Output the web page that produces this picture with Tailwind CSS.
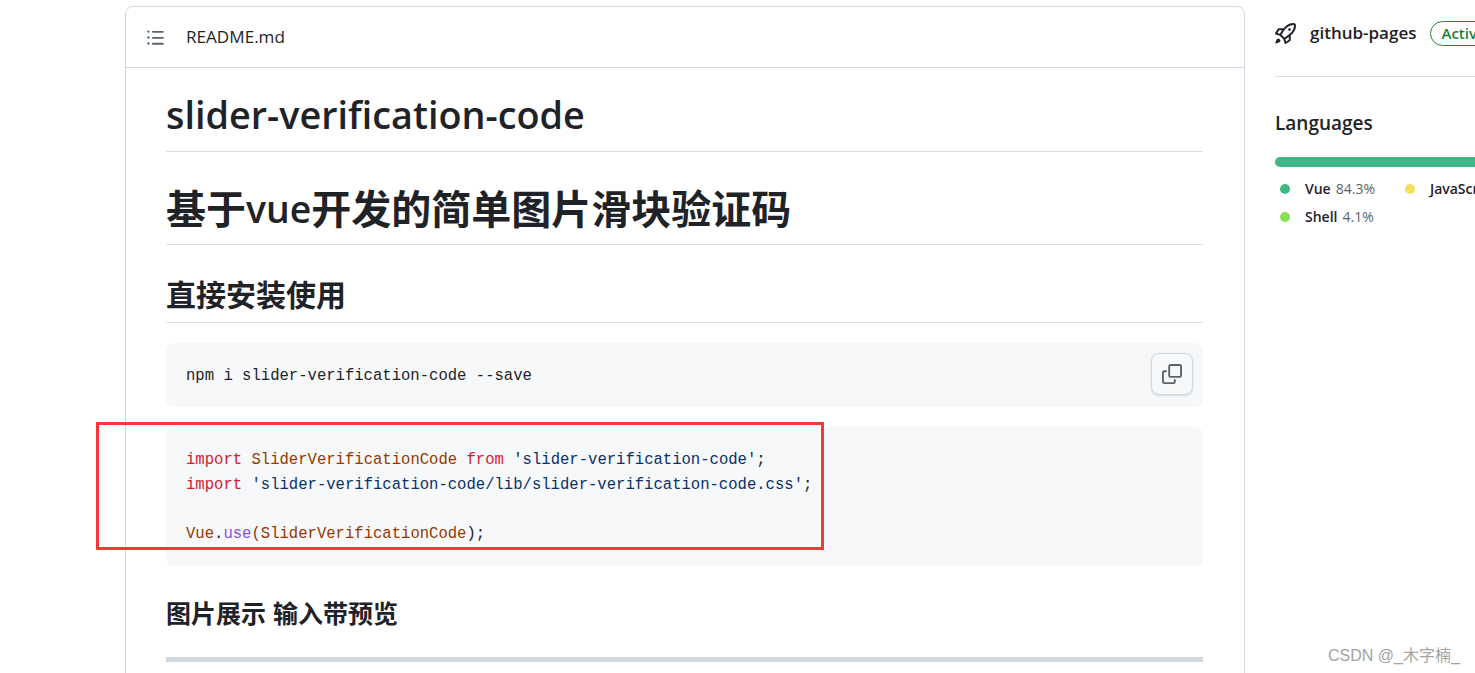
<!DOCTYPE html>
<html lang="zh"><head><meta charset="utf-8"><script src="https://cdn.jsdelivr.net/npm/@tailwindcss/browser@4"></script></head>
<body class="bg-white">
<div class="relative h-[673px] w-[1475px] overflow-hidden text-[#1f2328] font-['Open_Sans','Noto_Sans_CJK_SC',sans-serif]">
  <div class="flex items-start pt-[6px] pl-[125px]">
    <main class="w-[1120px] h-[800px] shrink-0 rounded-t-lg border border-[#d0d7de]">
      <div class="flex h-[61px] items-center gap-[21px] border-b border-[#d0d7de] pl-[20px]">
        <svg class="size-[19px] text-[#59636e]" viewBox="0 0 16 16" fill="currentColor"><path d="M5.75 2.5h8.5a.75.75 0 0 1 0 1.5h-8.5a.75.75 0 0 1 0-1.5Zm0 5h8.5a.75.75 0 0 1 0 1.5h-8.5a.75.75 0 0 1 0-1.5Zm0 5h8.5a.75.75 0 0 1 0 1.5h-8.5a.75.75 0 0 1 0-1.5ZM2 14a1 1 0 1 1 0-2 1 1 0 0 1 0 2Zm1-6a1 1 0 1 1-2 0 1 1 0 0 1 2 0ZM2 4a1 1 0 1 1 0-2 1 1 0 0 1 0 2Z"/></svg>
        <span class="text-[17.1px]">README.md</span>
      </div>
      <div class="pl-10 pr-[41px]">
        <h1 class="flex h-[84px] items-center border-b border-[#d8dee4] pt-[12px] text-[37.8px] font-semibold">slider-verification-code</h1>
        <h2 class="mt-[24px] flex h-[69px] items-center border-b border-[#d8dee4] pt-[1px] pb-[3px] text-[40px] font-bold leading-none">基于<span class="font-semibold text-[37.4px]">vue</span>开发的简单图片滑块验证码</h2>
        <h3 class="mt-[24px] flex h-[54px] items-center border-b border-[#d8dee4] pb-[2px] text-[30px] font-bold leading-none">直接安装使用</h3>
        <div class="relative mt-[20px] flex h-[64px] items-center rounded-lg bg-[#f6f8fa] pl-5 pt-[3px] font-['Liberation_Mono',monospace] text-[15.58px]">npm i slider-verification-code --save
          <button class="absolute right-[10px] top-[10px] flex size-[42px] items-center justify-center rounded-lg border border-[#d1d9e0] bg-[#f6f8fa] shadow-sm">
            <svg class="size-[20px] text-[#59636e]" viewBox="0 0 16 16" fill="currentColor"><path d="M0 6.75C0 5.784.784 5 1.75 5h1.5a.75.75 0 0 1 0 1.5h-1.5a.25.25 0 0 0-.25.25v7.5c0 .138.112.25.25.25h7.5a.25.25 0 0 0 .25-.25v-1.5a.75.75 0 0 1 1.5 0v1.5A1.75 1.75 0 0 1 9.25 16h-7.5A1.75 1.75 0 0 1 0 14.25Z"/><path d="M5 1.75C5 .784 5.784 0 6.75 0h7.5C15.216 0 16 .784 16 1.75v7.5A1.75 1.75 0 0 1 14.25 11h-7.5A1.75 1.75 0 0 1 5 9.25Zm1.75-.25a.25.25 0 0 0-.25.25v7.5c0 .138.112.25.25.25h7.5a.25.25 0 0 0 .25-.25v-7.5a.25.25 0 0 0-.25-.25Z"/></svg>
          </button>
        </div>
        <pre class="mt-[20px] h-[139px] rounded-lg bg-[#f6f8fa] pl-5 pt-[21px] font-['Liberation_Mono',monospace] text-[15.58px] leading-[24.6px]"><span class="text-[#cf222e]">import</span> <span class="text-[#953800]">SliderVerificationCode</span> <span class="text-[#cf222e]">from</span> <span class="text-[#0a3069]">'slider-verification-code'</span>;
<span class="text-[#cf222e]">import</span> <span class="text-[#0a3069]">'slider-verification-code/lib/slider-verification-code.css'</span>;

<span class="text-[#953800]">Vue</span>.<span class="text-[#8250df]">use</span><span class="text-[#953800]">(SliderVerificationCode</span>);</pre>
        <h4 class="mt-[31px] flex h-[32px] items-center gap-[7px] text-[25px] font-bold leading-none"><span>图片展示</span><span>输入带预览</span></h4>
        <div class="mt-[28px] h-[5px] bg-[#d1d9e0]"></div>
      </div>
    </main>
    <aside class="ml-[30px] w-[400px] shrink-0">
      <div class="flex h-[71px] items-center border-b border-[#d8dee4] pb-[16px]">
        <svg class="size-[21px]" viewBox="0 0 16 16" fill="currentColor"><path d="M14.064 0h.186C15.216 0 16 .784 16 1.75v.186a8.752 8.752 0 0 1-2.564 6.186l-.458.459c-.314.314-.641.616-.979.904v3.207c0 .608-.315 1.172-.833 1.49l-2.774 1.707a.749.749 0 0 1-1.11-.418l-.954-3.102a1.214 1.214 0 0 1-.145-.125L3.754 9.816a1.218 1.218 0 0 1-.124-.145L.528 8.717a.749.749 0 0 1-.418-1.11l1.71-2.774A1.748 1.748 0 0 1 3.31 4h3.204c.288-.338.59-.665.904-.979l.459-.458A8.749 8.749 0 0 1 14.064 0ZM8.938 3.623h-.002l-.458.458c-.76.76-1.437 1.598-2.02 2.5l-1.5 2.317 2.143 2.143 2.317-1.5c.902-.583 1.74-1.26 2.499-2.02l.459-.458a7.25 7.25 0 0 0 2.123-5.127V1.75a.25.25 0 0 0-.25-.25h-.186a7.249 7.249 0 0 0-5.125 2.123ZM3.56 14.56c-.732.732-2.334 1.045-3.005 1.148a.234.234 0 0 1-.201-.064.234.234 0 0 1-.064-.201c.103-.671.416-2.273 1.15-3.003a1.502 1.502 0 1 1 2.12 2.12Zm6.94-3.935c-.088.06-.177.118-.266.175l-2.35 1.521.548 1.783 1.949-1.2a.25.25 0 0 0 .119-.213ZM3.678 8.116 5.2 5.766c.058-.09.117-.178.176-.266H3.309a.25.25 0 0 0-.213.119l-1.2 1.95ZM12 5a1 1 0 1 1-2 0 1 1 0 0 1 2 0Z"/></svg>
        <span class="ml-[14px] text-[17px] font-semibold">github-pages</span>
        <span class="ml-[14px] flex h-[25px] items-center rounded-full border border-[#1f883d] px-[10px] text-[15px] font-semibold text-[#1a7f37]">Active</span>
      </div>
      <h2 class="mt-[32px] text-[19px] font-semibold leading-[28px]">Languages</h2>
      <div class="mt-[20px] h-[10px] rounded-l-full bg-[#41b883]"></div>
      <div class="mt-[12px] flex items-center text-[14px] leading-[20px]">
        <span class="ml-[5px] size-[10px] rounded-full bg-[#41b883]"></span>
        <span class="ml-[15px] font-semibold">Vue</span><span class="ml-[5px] text-[#59636e]">84.3%</span>
        <span class="ml-[30px] size-[10px] rounded-full bg-[#f1e05a]"></span>
        <span class="ml-[15px] font-semibold">JavaScript</span>
      </div>
      <div class="mt-[8px] flex items-center text-[14px] leading-[20px]">
        <span class="ml-[5px] size-[10px] rounded-full bg-[#89e051]"></span>
        <span class="ml-[15px] font-semibold">Shell</span><span class="ml-[5px] text-[#59636e]">4.1%</span>
      </div>
    </aside>
  </div>
  <div class="absolute left-[96px] top-[422px] h-[128px] w-[728px] border-[3px] border-[#f83838]"></div>
  <div class="absolute left-[1328px] top-[646px] font-['Liberation_Sans','Noto_Sans_CJK_SC',sans-serif] text-[16px] leading-[20px] text-[#a3a3a3]">CSDN @_木字楠_</div>
</div>
</body></html>
